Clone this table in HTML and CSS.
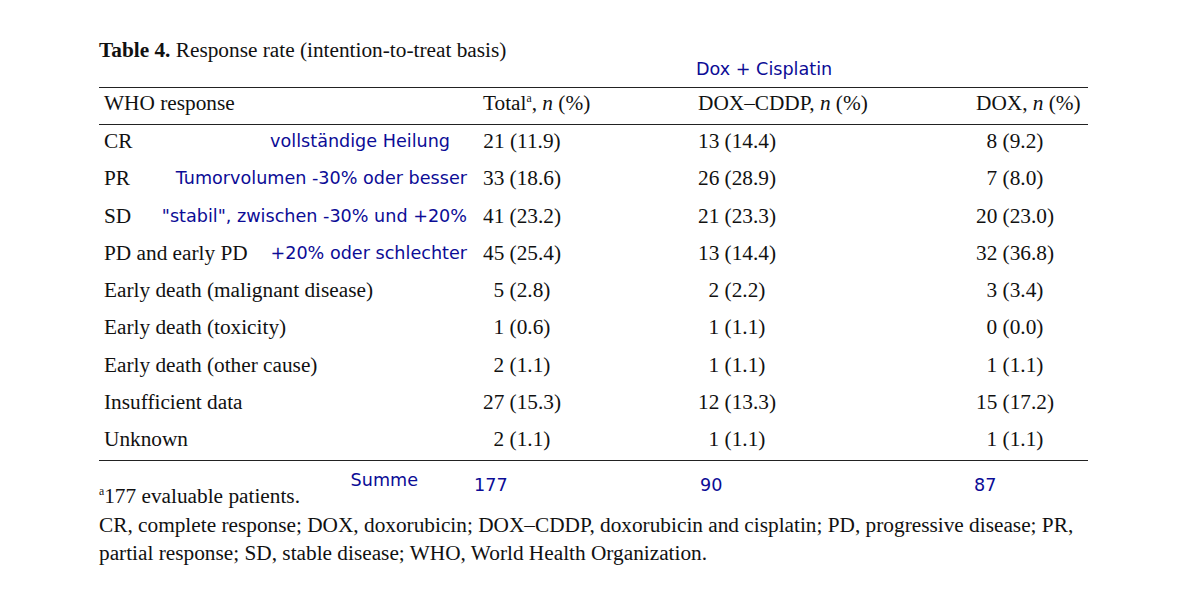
FILE: index.html
```html
<!DOCTYPE html>
<html>
<head>
<meta charset="utf-8">
<link rel="stylesheet" href="styles.css">
</head>
<body>
<div class="page">
  <div class="title"><b>Table 4.</b> Response rate (intention-to-treat basis)</div>
  <div class="topnote"><span class="note">Dox + Cisplatin</span></div>
  <div class="table">
    <div class="row head">
      <div class="c1"><span>WHO response</span></div>
      <div class="cv">Total<sup>a</sup>, <i>n</i> (%)</div>
      <div class="cv">DOX–CDDP, <i>n</i> (%)</div>
      <div class="cv">DOX, <i>n</i> (%)</div>
    </div>
    <div class="body">
      <div class="row">
        <div class="c1"><span>CR</span><span class="note ann ann-short">vollständige Heilung</span></div>
        <div class="cv"><span class="v">21 (11.9)</span></div>
        <div class="cv"><span class="v">13 (14.4)</span></div>
        <div class="cv"><span class="v">8 (9.2)</span></div>
      </div>
      <div class="row">
        <div class="c1"><span>PR</span><span class="note ann">Tumorvolumen -30% oder besser</span></div>
        <div class="cv"><span class="v">33 (18.6)</span></div>
        <div class="cv"><span class="v">26 (28.9)</span></div>
        <div class="cv"><span class="v">7 (8.0)</span></div>
      </div>
      <div class="row">
        <div class="c1"><span>SD</span><span class="note ann">"stabil", zwischen -30% und +20%</span></div>
        <div class="cv"><span class="v">41 (23.2)</span></div>
        <div class="cv"><span class="v">21 (23.3)</span></div>
        <div class="cv"><span class="v">20 (23.0)</span></div>
      </div>
      <div class="row">
        <div class="c1"><span>PD and early PD</span><span class="note ann">+20% oder schlechter</span></div>
        <div class="cv"><span class="v">45 (25.4)</span></div>
        <div class="cv"><span class="v">13 (14.4)</span></div>
        <div class="cv"><span class="v">32 (36.8)</span></div>
      </div>
      <div class="row">
        <div class="c1"><span>Early death (malignant disease)</span></div>
        <div class="cv"><span class="v">5 (2.8)</span></div>
        <div class="cv"><span class="v">2 (2.2)</span></div>
        <div class="cv"><span class="v">3 (3.4)</span></div>
      </div>
      <div class="row">
        <div class="c1"><span>Early death (toxicity)</span></div>
        <div class="cv"><span class="v">1 (0.6)</span></div>
        <div class="cv"><span class="v">1 (1.1)</span></div>
        <div class="cv"><span class="v">0 (0.0)</span></div>
      </div>
      <div class="row">
        <div class="c1"><span>Early death (other cause)</span></div>
        <div class="cv"><span class="v">2 (1.1)</span></div>
        <div class="cv"><span class="v">1 (1.1)</span></div>
        <div class="cv"><span class="v">1 (1.1)</span></div>
      </div>
      <div class="row">
        <div class="c1"><span>Insufficient data</span></div>
        <div class="cv"><span class="v">27 (15.3)</span></div>
        <div class="cv"><span class="v">12 (13.3)</span></div>
        <div class="cv"><span class="v">15 (17.2)</span></div>
      </div>
      <div class="row">
        <div class="c1"><span>Unknown</span></div>
        <div class="cv"><span class="v">2 (1.1)</span></div>
        <div class="cv"><span class="v">1 (1.1)</span></div>
        <div class="cv"><span class="v">1 (1.1)</span></div>
      </div>
    </div>
  </div>
  <div class="sumrow">
    <div class="s1"><span class="note">Summe</span></div>
    <div class="sv s-total"><span class="note">177</span></div>
    <div class="sv s-cddp"><span class="note">90</span></div>
    <div class="sv s-dox"><span class="note">87</span></div>
  </div>
  <div class="foot">
    <p><sup>a</sup>177 evaluable patients.</p>
    <p>CR, complete response; DOX, doxorubicin; DOX–CDDP, doxorubicin and cisplatin; PD, progressive disease; PR, partial response; SD, stable disease; WHO, World Health Organization.</p>
  </div>
</div>
</body>
</html>
```

FILE: styles.css
```css
html, body {
  margin: 0;
  padding: 0;
  background: #fff;
}
.page {
  width: 989px;
  padding: 37px 0 0 99px;
  font-family: "Liberation Serif", "Times New Roman", serif;
  font-size: 21.3px;
  color: #111;
}
.title {
  line-height: 26px;
  height: 26px;
}
.title b {
  font-weight: bold;
}
.note {
  font-family: "DejaVu Sans", sans-serif;
  font-size: 17.6px;
  color: #0c0c96;
}
.topnote {
  height: 20px;
  line-height: 20px;
  margin-top: -5px;
  margin-bottom: 9px;
  padding-left: 597px;
}
.table {
  border-top: 1px solid #222;
  border-bottom: 1px solid #222;
}
.row {
  display: grid;
  grid-template-columns: 379px 215px 278px 117px;
  height: 37.25px;
  line-height: 32px;
  align-items: start;
}
.row.head {
  height: 36px;
  line-height: 30px;
  border-bottom: 1px solid #222;
}
.c1 {
  display: flex;
  justify-content: space-between;
  align-items: center;
  padding: 0 11px 0 5px;
  white-space: nowrap;
}
.ann-short {
  margin-right: 17px;
}
.cv {
  padding-left: 5px;
  white-space: nowrap;
}
.v {
  display: inline-block;
  width: 78px;
  text-align: center;
}
sup {
  font-size: 0.55em;
  vertical-align: 0.7em;
  line-height: 0;
}
.sumrow {
  display: grid;
  grid-template-columns: 379px 215px 278px 117px;
  height: 21px;
  line-height: 20px;
}
.s1 {
  text-align: right;
  padding: 8px 60px 0 0;
}
.sv {
  padding-top: 13px;
}
.s-total { margin-left: -4px; }
.s-cddp { padding-left: 7px; }
.s-dox { padding-left: 3px; }
.foot p {
  margin: 0;
  line-height: 28.6px;
  width: 985px;
}
```
